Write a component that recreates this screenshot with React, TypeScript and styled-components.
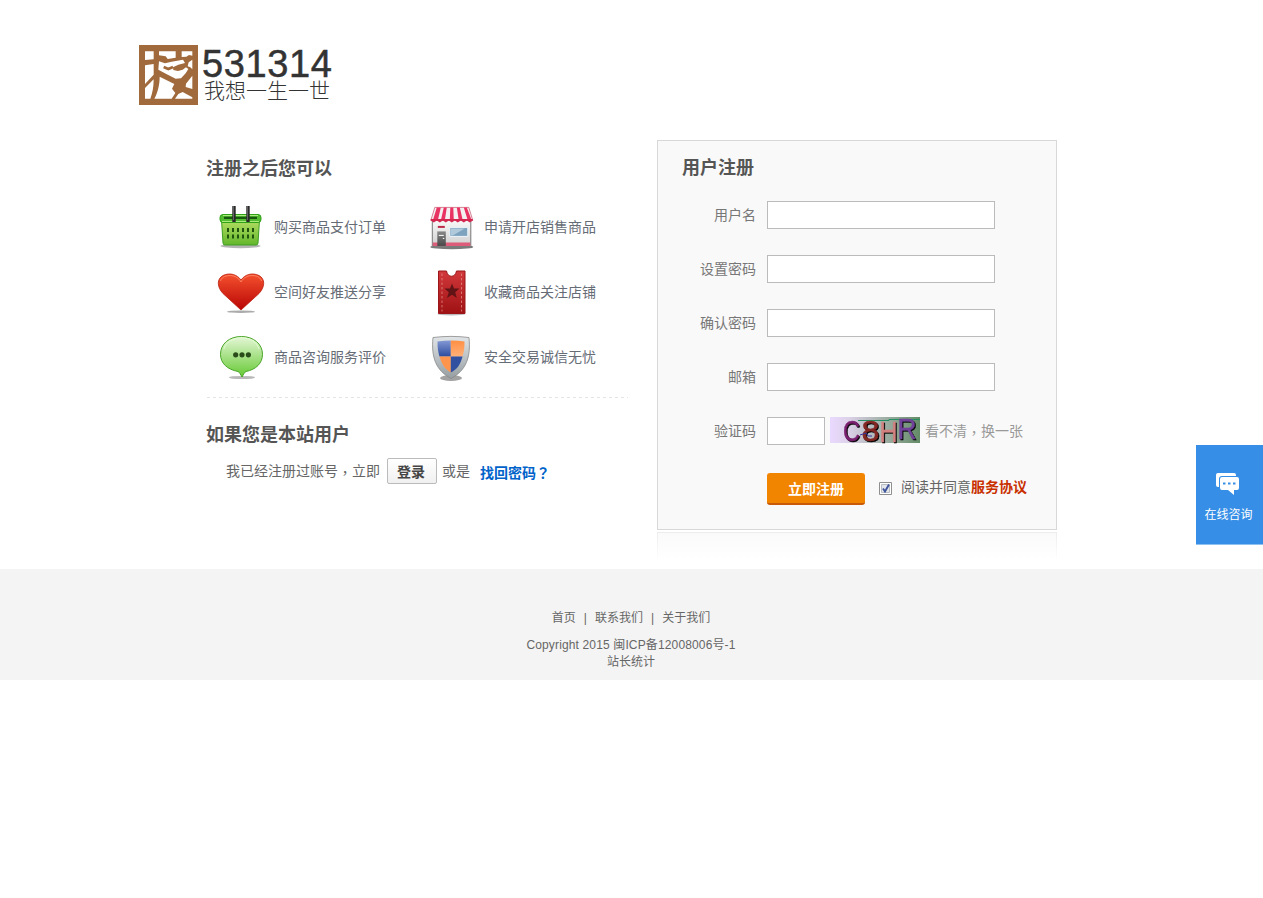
import React from 'react';
import styled, { createGlobalStyle } from 'styled-components';

const GlobalStyle = createGlobalStyle`
  * { box-sizing: border-box; }
  body {
    margin: 0;
    background: #fff;
    color: #666;
    font: 14px/20px "Liberation Sans", "Noto Sans CJK SC", sans-serif;
  }
  a { color: inherit; text-decoration: none; }
  svg { display: block; }
`;

const Header = styled.header`
  display: flex;
  height: 140px;
  padding: 45px 0 0 139px;
`;

const Brand = styled.div`
  display: flex;
  flex-direction: column;
  margin-left: 3px;
  color: #333;
`;

const BrandNumber = styled.div`
  height: 34px;
  font: 38px/38px "Liberation Sans", sans-serif;
  letter-spacing: 0.6px;
  -webkit-text-stroke: 0.5px #333;
`;

const BrandSlogan = styled.div`
  padding-left: 2px;
  font: 300 21px/20px "Noto Sans CJK SC", sans-serif;
  white-space: nowrap;
`;

const Main = styled.main`
  display: flex;
  height: 429px;
  padding-left: 206px;
`;

const Intro = styled.section`
  width: 422px;
  margin-right: 29px;
`;

const Title = styled.h3<{ $top: number }>`
  margin: 0;
  padding-top: ${(p) => p.$top}px;
  color: #555;
  font: bold 18px/24px "Noto Sans CJK SC", sans-serif;
`;

const Features = styled.ul`
  display: grid;
  grid-template-columns: 210px 212px;
  grid-auto-rows: 65px;
  margin: 15px 0 0;
  padding: 0 0 8px;
  list-style: none;
`;

const Feature = styled.li`
  display: flex;
  align-items: center;
  gap: 9px;
  padding-left: 11px;
  color: #666c76;
`;

const Divider = styled.div`
  height: 1px;
  margin-left: 1px;
  background: repeating-linear-gradient(90deg, #e4e4e4 0 3px, transparent 3px 6px);
`;

const LoginLine = styled.div`
  display: flex;
  align-items: center;
  height: 26px;
  margin-top: 13px;
  padding-left: 20px;
`;

const Punct = styled.span`
  font-family: "Noto Sans CJK TC", sans-serif;
  line-height: 1;
  vertical-align: -2px;
`;

const QuestionMark = styled.span`
  font-family: "Noto Sans CJK TC", sans-serif;
`;

const LoginButton = styled.button`
  width: 50px;
  height: 26px;
  margin: 0 5px 0 7px;
  padding: 0 2px 0 0;
  border: 1px solid #bbb;
  border-radius: 2px;
  background: linear-gradient(#fff, #f0f0f0);
  color: #444;
  font: bold 14px/20px "Noto Sans CJK SC", sans-serif;
`;

const FindPassword = styled.a`
  margin-left: 10px;
  padding-top: 2px;
  color: #0063ca !important;
  font-weight: bold;
`;

const PanelColumn = styled.section`
  width: 400px;
`;

const Panel = styled.form`
  height: 390px;
  padding-left: 24px;
  border: 1px solid #d8d8d8;
  background: #f9f9f9;
`;

const Reflection = styled.div`
  height: 28px;
  margin-top: 2px;
  border: 1px solid;
  border-width: 1px 1px 0;
  border-image: linear-gradient(#ececec, #fff) 1;
  background: linear-gradient(#fafafa, #fff);
`;

const Field = styled.label`
  display: flex;
  height: 28px;
  margin-bottom: 26px;
  color: #777;
`;

const FieldName = styled.span`
  width: 74px;
  margin-right: 11px;
  line-height: 28px;
  text-align: right;
`;

const Fields = styled.div`
  padding-top: 23px;
`;

const TextInput = styled.input<{ $width: number }>`
  width: ${(p) => p.$width}px;
  height: 28px;
  padding: 4px;
  border: 1px solid #bbb;
  outline: 0;
  background: #fff;
`;

const CaptchaImage = styled.svg`
  margin: 0 5px;
  overflow: visible;
`;

const CaptchaLetter = styled.text`
  font: 29px "Liberation Sans", sans-serif;
  stroke-width: 0.5px;
  filter: drop-shadow(1px 1px 0 #000);
`;

const Refresh = styled.span`
  color: #999;
  line-height: 28px;
`;

const SubmitLine = styled.div`
  display: flex;
  padding: 2px 0 0 85px;
`;

const Submit = styled.button`
  width: 98px;
  height: 32px;
  padding: 0;
  border: 0;
  border-bottom: 2px solid #c85a0a;
  border-radius: 3px;
  background: #f28500;
  color: #fff;
  font: bold 14px/30px "Noto Sans CJK SC", sans-serif;
`;

const CheckSvg = styled.svg`
  margin: 9px 9px 0 14px;
`;

const Agreement = styled.span`
  line-height: 28px;
  b { color: #c83000; }
`;

const Footer = styled.footer`
  height: 111px;
  padding: 41px 1px 0 0;
  background: #f4f4f4;
  font-size: 12px;
  line-height: 17px;
  text-align: center;
`;

const FooterNav = styled.nav`
  display: flex;
  justify-content: center;
  gap: 8px;
  margin-bottom: 10px;
`;

const Copyright = styled.div`
  letter-spacing: 0.14px;
`;

const Consult = styled.aside`
  position: fixed;
  top: 445px;
  right: 0;
  display: flex;
  flex-direction: column;
  align-items: center;
  width: 67px;
  height: 100px;
  padding: 27px 2px 0 0;
  border-bottom: 1px solid #8fc0f2;
  background: #368ee6;
  color: #fff;
  font-size: 12px;
  svg { margin-right: 2px; }
  span { margin-top: 9px; }
`;

const Seal = () => (
  <svg width="60" height="60" viewBox="6 6 180 180">
    <path fill="#a06a3d" d="M6 6h177v180H6z" />
    <g fill="#fff">
      <path d="M24 25h26v24l-26 2zM24 67l26-4v32l-26 28zM24 135l26-26c0 24-4 43-10 58H24z" />
      <path d="M66 25h50v19l-24 4-6-8-20-3zM134 25h32v13l-10-2-8 5-14 1z" />
      <path d="M66 55l18 6 20-5 34-6 6 10-20 5-16 8 1 8 14 3 14-4 10-7 7 5-8 13-14 15-16 1-28-14-24-13z" />
      <path d="M68 101l44 22-7 14 10 13-11 17H52c10-18 16-42 16-66z" />
      <path d="M166 50v29l-6-6-8-3 3-12zM147 122l19-24v40l-20-6zM137 147l29 16v4h-52l10-14z" />
    </g>
    <path d="M80 72l14 6 14-6" fill="none" stroke="#a06a3d" strokeWidth="8" />
  </svg>
);

const Basket = () => (
  <>
    <ellipse cx="23.500" cy="43" rx="20" ry="2.200" fill="#777" opacity=".55" />
    <path d="M4.500 17h38l-1.500 23q0 2-2 2H8q-2 0-2-2z" fill="url(#basket)" stroke="#3f9f22" />
    <rect x="3" y="11.500" width="41" height="8" rx="3" fill="#52bb30" stroke="#2fa018" />
    <path d="M7 13.800h33v2.200H7z" fill="#17570e" />
    <path d="M6 12.500h35M5 18.500h37" stroke="#a9ec7c" />
    <path d="M10 27h28M10 33.500h28" stroke="#20540f" strokeWidth="4" strokeDasharray="2 3" />
    <path d="M17 3v16M31 3v16" stroke="#292929" strokeWidth="3.400" />
    <path d="M16.400 3v14M30.400 3v14" stroke="#777" strokeWidth=".8" />
  </>
);

const Store = () => (
  <g transform="translate(.8 .4)">
    <ellipse cx="24" cy="43.500" rx="21.500" ry="2.400" fill="#333" opacity=".65" />
    <path d="M4.500 17h38.500v26H4.500z" fill="url(#wall)" stroke="#777" />
    <path d="M5 39h37.500v3.500H5z" fill="#dc5c79" />
    <path d="M7 4h34l4 13H3z" fill="#f4f0f1" stroke="#c7506a" strokeWidth=".7" />
    <path d="M9 4h4l-3 13H5zM16 4h3l-2 13h-4zM22.500 4h3l.5 13h-4zM29 4h3l3 13h-4zM36 4h3l5 13h-4z" fill="#e93362" />
    <path d="M3 15.500h42v1.500l-3 2-3-2-3 2-3-2-3 2-3-2-3 2-3-2-3 2-3-2-3 2-3-2-3 2-3-2z" fill="#d32750" />
    <path d="M10 22.500h7v2h-7z" fill="#bc2949" />
    <path d="M9.500 28h8.500v14.500H9.500z" fill="url(#door)" />
    <path d="M11 32h5M15 35h1.500" stroke="#fff" />
    <path d="M22 24h18v9H22z" fill="#7da3bf" stroke="#eef5fa" />
    <path d="M23 25h14l-12 7h-2z" fill="#b0c9db" />
  </g>
);

const Heart = () => (
  <>
    <ellipse cx="24" cy="43.700" rx="14" ry="1.300" fill="#888" opacity=".7" />
    <path d="M24 42L6 25.500C0 19-.5 11 6 7.500c7-3.300 14-1 18 4.500C28 6.500 35 4.200 42 7.500c6.500 3.500 6 11.500 0 18z" fill="url(#heart)" stroke="#bd1d0d" strokeWidth=".8" />
    <path d="M3.500 13c1-6 15-9 20.500 1 5.500-10 19.500-7 20.500-1" fill="none" stroke="#ff8e6e" strokeWidth=".8" />
  </>
);

const Ticket = () => (
  <>
    <ellipse cx="24.500" cy="46" rx="14" ry="1.500" fill="#777" opacity=".5" />
    <path d="M11.500 3h8c1 7 9 7 10 0H38v42.500H11.500z" fill="url(#ticket)" stroke="#9b1618" />
    <path d="M15 5.500v38M34.500 5.500v38" stroke="#e79a92" strokeWidth=".7" strokeDasharray="2.500 2" />
    <path d="M25 15.500l2 5h5.500l-4.300 3.700 1.600 5.800-4.800-3.300-5 3.300 1.800-5.800-4.300-3.700H23z" fill="#611315" />
  </>
);

const Bubble = () => (
  <>
    <ellipse cx="25" cy="44.500" rx="13" ry="1.600" fill="#888" opacity=".6" />
    <path d="M24.500 3.500c12 0 21 7.500 21 17.800 0 9-6.500 15.200-16.500 17.200-1.500.5-2.500 3-4 5.500-1.500-2.500-2.500-5-4-5.500C10.500 36.500 3.500 30.500 3.500 21.300 3.500 11 12 3.500 24.500 3.500z" fill="url(#bubble)" stroke="#4aa528" />
    <path d="M7 16c4-15 31-15 35 0" fill="none" stroke="#e6ffd7" strokeWidth=".8" />
    <g fill="#2a4c1b"><circle cx="18.700" cy="21.800" r="2.600" /><circle cx="25" cy="21.800" r="2.600" /><circle cx="31.400" cy="21.800" r="2.600" /></g>
  </>
);

const Shield = () => (
  <>
    <ellipse cx="24" cy="45" rx="11" ry="3" fill="#555" opacity=".55" />
    <path d="M6 4.500c12-1.500 24-1.500 36 0 2 20-3 33-18 41C9 37.500 4 24.500 6 4.500z" fill="url(#steel)" stroke="#888" strokeWidth=".8" />
    <path d="M10.500 8.500q7-1 13.300-1v16H12.500c-1.500-5-2-9-2-15z" fill="url(#blue)" />
    <path d="M23.800 7.500q7 0 13.700 1c0 6-.5 10-2 15H23.800z" fill="url(#orange)" />
    <path d="M12.500 23.500h11.300V39.500c-5.500-3-9-8-11.300-16z" fill="#ff954d" />
    <path d="M23.800 23.500h11.700c-2 8-5.500 13-11.700 16z" fill="#3150a0" />
  </>
);

const Gradients = () => (
  <svg width="0" height="0" style={{ position: 'absolute' }}>
    <defs>
      {[
        ['basket', '#b3dd62', '#63b72d'],
        ['wall', '#f8f8f8', '#cfcfcf'],
        ['door', '#888', '#484848'],
        ['heart', '#f4512e', '#b90505'],
        ['ticket', '#d2383b', '#9f1214'],
        ['bubble', '#e5f7d7', '#65c933'],
        ['steel', '#e1e5e7', '#969ea2'],
        ['blue', '#8399d4', '#2d4c9e'],
        ['orange', '#ff8f43', '#ffb078'],
      ].map(([id, from, to]) => (
        <linearGradient key={id} id={id} x1="0" y1="0" x2="0" y2="1">
          <stop stopColor={from} />
          <stop offset="1" stopColor={to} />
        </linearGradient>
      ))}
    </defs>
  </svg>
);

const features: [React.FC, string][] = [
  [Basket, '购买商品支付订单'],
  [Store, '申请开店销售商品'],
  [Heart, '空间好友推送分享'],
  [Ticket, '收藏商品关注店铺'],
  [Bubble, '商品咨询服务评价'],
  [Shield, '安全交易诚信无忧'],
];

const captchaLetters = [
  { char: 'C', x: 13, y: 23.5, width: 17, color: '#79206f' },
  { char: '8', x: 31.5, y: 23.5, width: 18, color: '#832823' },
  { char: 'H', x: 49.5, y: 24.5, width: 18, color: '#d1817f' },
  { char: 'R', x: 67.5, y: 21.5, width: 19, color: '#71429a' },
];

const Captcha = () => (
  <CaptchaImage width="90" height="26" viewBox="0 0 90 26">
    <defs>
      <linearGradient id="captcha">
        <stop stopColor="#ead9ff" />
        <stop offset=".2" stopColor="#ddd2ea" />
        <stop offset=".6" stopColor="#a1b0a7" />
        <stop offset="1" stopColor="#638b67" />
      </linearGradient>
    </defs>
    <path d="M0 0h90v26H0z" fill="url(#captcha)" />
    <path d="M28 3.500h31v-1h31" fill="none" stroke="#258e63" />
    {captchaLetters.map(({ char, x, y, width, color }) => (
      <CaptchaLetter key={char} x={x} y={y} textLength={width} lengthAdjust="spacingAndGlyphs" fill={color} stroke={color}>
        {char}
      </CaptchaLetter>
    ))}
    <path d="M30 18l6-2 2 3h4" fill="none" stroke="#3435a0" />
  </CaptchaImage>
);

export default function App() {
  return (
    <>
      <GlobalStyle />
      <Gradients />
      <Header>
        <Seal />
        <Brand>
          <BrandNumber>531314</BrandNumber>
          <BrandSlogan>我想一生一世</BrandSlogan>
        </Brand>
      </Header>
      <Main>
        <Intro>
          <Title $top={15}>注册之后您可以</Title>
          <Features>
            {features.map(([Icon, text]) => (
              <Feature key={text}>
                <svg width="48" height="48" viewBox="0 0 48 48"><Icon /></svg>
                {text}
              </Feature>
            ))}
          </Features>
          <Divider />
          <Title $top={23}>如果您是本站用户</Title>
          <LoginLine>
            <span>我已经注册过账号<Punct>，</Punct>立即</span>
            <LoginButton>登录</LoginButton>
            或是
            <FindPassword href="#">找回密码<QuestionMark>？</QuestionMark></FindPassword>
          </LoginLine>
        </Intro>
        <PanelColumn>
          <Panel>
            <Title $top={13}>用户注册</Title>
            <Fields>
              {['用户名', '设置密码', '确认密码', '邮箱'].map((name) => (
                <Field key={name}>
                  <FieldName>{name}</FieldName>
                  <TextInput $width={228} />
                </Field>
              ))}
              <Field>
                <FieldName>验证码</FieldName>
                <TextInput $width={58} />
                <Captcha />
                <Refresh>看不清<Punct>，</Punct>换一张</Refresh>
              </Field>
            </Fields>
            <SubmitLine>
              <Submit type="button">立即注册</Submit>
              <CheckSvg width="13" height="13" viewBox="0 0 13 13">
                <path d="M.5.5h12v12H.5z" fill="#fff" stroke="#8e8f8f" />
                <path d="M2.500 2.500h8v8h-8z" fill="#e2e5e9" stroke="#b9bec5" />
                <path d="M4 6.500l2 3 4-7" fill="none" stroke="#40549c" strokeWidth="1.900" />
              </CheckSvg>
              <Agreement>阅读并同意<b>服务协议</b></Agreement>
            </SubmitLine>
          </Panel>
          <Reflection />
        </PanelColumn>
      </Main>
      <Footer>
        <FooterNav>
          <a href="#">首页</a><span>|</span><a href="#">联系我们</a><span>|</span><a href="#">关于我们</a>
        </FooterNav>
        <Copyright>Copyright 2015 闽ICP备12008006号-1</Copyright>
        <div>站长统计</div>
      </Footer>
      <Consult>
        <svg width="24" height="24" viewBox="0 0 24 24">
          <path d="M2 1h16q2 0 2 2v1H6Q3 4 3 7v8H2q-2 0-2-2V3q0-2 2-2z" fill="#fff" />
          <path d="M6 5h15q2 0 2 2v9q0 2-2 2h-3v5l-6-5H6q-2 0-2-2V7q0-2 2-2z" fill="#fff" />
          <path d="M7 10.500h2.500v2H7zM12 10.500h2.500v2H12zM17 10.500h2.500v2H17z" fill="#368ee6" />
        </svg>
        <span>在线咨询</span>
      </Consult>
    </>
  );
}
